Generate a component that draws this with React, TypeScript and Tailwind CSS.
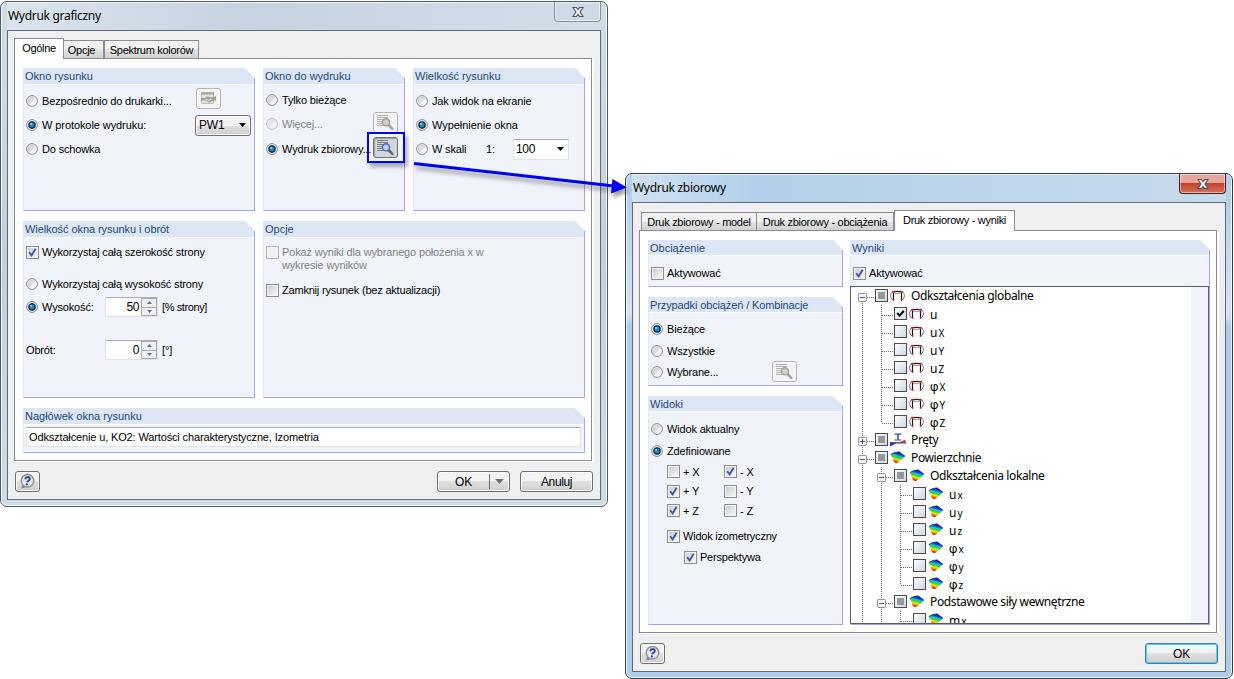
import type { ReactNode } from "react";
import clsx from "clsx";

type Children = { children?: ReactNode; className?: string };

function Text({ children, className }: Children) {
  return <span className={clsx("whitespace-nowrap", className)}>{children}</span>;
}

function Radio({ checked, disabled }: { checked?: boolean; disabled?: boolean }) {
  return (
    <svg viewBox="0 0 12 12" className={clsx("mr-px h-3 w-3 shrink-0", disabled && "opacity-50")}>
      <circle cx="6" cy="6" r="5.4" fill="#f4f4f4" stroke="#8b8d90" />
      <circle cx="6" cy="6" r="3.8" fill="#dcdddf" stroke="#c6c8ca" strokeWidth="0.8" />
      {!checked && <path d="M3.6 9.2 A3.9 3.9 0 0 0 9.2 3.6 Z" fill="#f3f3f3" />}
      {checked && <circle cx="6" cy="6" r="3.1" fill="#1787c0" stroke="#0b2f52" strokeWidth="1.3" />}
      {checked && <circle cx="5.2" cy="5" r="1.1" fill="#8fdcf5" />}
    </svg>
  );
}

function Checkbox({ checked, disabled }: { checked?: boolean; disabled?: boolean }) {
  return (
    <span
      className={clsx(
        "flex h-[13px] w-[13px] shrink-0 border bg-[#f4f4f4] p-px",
        disabled ? "border-[#b8b8b8]" : "border-[#8e8f8f]"
      )}
    >
      <span
        className={clsx(
          "flex h-[9px] w-[9px]",
          disabled ? "bg-[#f0f0f0]" : "bg-linear-to-br from-[#cbcfd5] to-[#f6f6f6]"
        )}
      >
        {checked && (
          <svg viewBox="0 0 9 9" className="h-[9px] w-[9px]">
            <path d="M1.2 4.2 L3.6 7.4 L7.6 0.8" fill="none" stroke="#41579e" strokeWidth="1.9" />
          </svg>
        )}
      </span>
    </span>
  );
}

function Group({ title, small, className, titleClass, children }: Children & { title: string; small?: boolean; titleClass?: string }) {
  return (
    <section className={clsx("relative flex flex-col bg-[#f0f3f9]", className)}>
      <header
        className={clsx(
          "flex shrink-0 items-center border-b border-white bg-[#dce6f4] pl-[2px] tracking-normal text-[#1e4a7c] [box-sizing:content-box]",
          small ? "h-[15px]" : "h-4"
        )}
      >
        <Text className={titleClass}>{title}</Text>
      </header>
      <div className="flex grow flex-col border-b border-l border-b-[#a6a6ee] border-l-[#e1e9f5] pl-[2px]">{children}</div>
      {/* cut corner and the edge below it */}
      <svg viewBox="0 0 10 10" className="absolute top-0 right-0 h-[10px] w-[10px]">
        <path d="M0 0 H10 V10 Z" fill="#fff" />
      </svg>
      <span className="absolute top-[10px] right-0 bottom-0 w-px bg-[#a6a6ee]" />
    </section>
  );
}

function Row({ children, className }: Children) {
  return <div className={clsx("flex shrink-0 items-center gap-[3px]", className)}>{children}</div>;
}

function Tab({ children, active, className }: Children & { active?: boolean }) {
  return (
    <div
      className={clsx(
        "flex items-center justify-center border border-b-0 border-[#8b8c95] tracking-[-0.29px]",
        active
          ? "relative -mb-px h-[21px] bg-white pb-[3px]"
          : "h-[18px] bg-linear-to-b from-[#f2f2f2] from-50% via-[#e4e4e4] via-50% to-[#d2d2d2]",
        className
      )}
    >
      {children}
    </div>
  );
}

function Button({ children, className }: Children) {
  return (
    <div
      className={clsx(
        "flex h-[21px] items-center justify-center rounded-[3px] border border-[#707070] bg-linear-to-b from-[#f3f3f3] from-50% via-[#e0e0e0] via-50% to-[#cfcfcf] shadow-[inset_0_0_0_1px_#fafafa]",
        className
      )}
    >
      {children}
    </div>
  );
}

function Find({ disabled }: { disabled?: boolean }) {
  return (
    <Button
      className={clsx(
        "w-[25px] shrink-0",
        disabled ? "border-[#b4b4b4]! bg-[#f3f3f3] bg-none!" : "bg-[#d3d6da] bg-none! shadow-[inset_1px_1px_1px_#9a9da2]!"
      )}
    >
      <svg viewBox="0 0 19 17" className="h-[17px] w-[19px] shrink-0">
        <path
          d="M1 1.5 H12 M1 3.5 H12 M1 5.5 H7 M1 7.5 H6 M1 9.5 H6 M1 11.5 H8"
          stroke={disabled ? "#a8a8a8" : "#70757c"}
          strokeWidth="0.9"
        />
        <path d="M12.5 11 L16.3 14.8" stroke={disabled ? "#a5a5a5" : "#5a678a"} strokeWidth="2.6" strokeLinecap="round" />
        <circle cx="10" cy="8.3" r="3.6" fill={disabled ? "#d0d0cb" : "#b5cdf5"} stroke={disabled ? "#a0a09c" : "#4a68b4"} strokeWidth="1.4" />
      </svg>
    </Button>
  );
}

function HelpButton() {
  return (
    <Button className="w-[25px]">
      <svg viewBox="0 0 17 17" className="h-[17px] w-[17px] shrink-0">
        <path d="M3 11 L2.5 15.5 L7.5 14 Z" fill="#80858c" />
        <circle cx="8.5" cy="7.8" r="6.3" fill="#e3e8f1" stroke="#8f949b" strokeWidth="1.5" />
        <path
          d="M6.4 6.2 C6.6 3.4 11 3.4 10.8 6 C10.6 7.6 8.6 7.5 8.2 9.4"
          fill="none"
          stroke="#2f437f"
          strokeWidth="1.9"
        />
        <circle cx="7.8" cy="11.4" r="1.1" fill="#2f437f" />
      </svg>
    </Button>
  );
}

function Arrow({ className }: { className?: string }) {
  return (
    <svg viewBox="0 0 7 4" className={clsx("shrink-0", className ?? "h-1 w-[7px]")}>
      <path d="M0 0 H7 L3.5 4 Z" fill="currentColor" />
    </svg>
  );
}

function Spinner({ value }: { value: string }) {
  return (
    <div className="flex h-5 w-[53px] shrink-0 border border-[#e2e3ea] border-t-[#abadb3] bg-white">
      <Text className="grow self-center pr-[2px] text-right text-xs tracking-[-0.4px]">{value}</Text>
      <span className="flex w-4 flex-col gap-px bg-[#a9abb0] p-px pl-px">
        <span className="flex grow items-center justify-center bg-[#f0f0f0] text-[#5a6fc0]">
          <Arrow className="h-[3px] w-[5px] rotate-180" />
        </span>
        <span className="flex grow items-center justify-center bg-[#f0f0f0] text-[#5a6fc0]">
          <Arrow className="h-[3px] w-[5px]" />
        </span>
      </span>
    </div>
  );
}

function Window({ title, active, className, children }: Children & { title: string; active?: boolean }) {
  return (
    <div
      className={clsx(
        "flex h-[506px] w-[608px] flex-col rounded-[7px] border px-[6px] pb-[6px] shadow-[inset_0_0_0_1px_rgba(255,255,255,0.75)]",
        active
          ? "border-[#2f3d4a] bg-linear-to-b from-[#b3d1ea] from-5% via-[#d5e4f3] via-28% to-[#aecdea] to-30%"
          : "border-[#4d5963] bg-linear-to-b from-[#d3dde7] via-[#c3cfdd] to-[#cfdbe7]",
        className
      )}
    >
      <div
        className={clsx(
          "mt-px flex h-[27px] shrink-0 justify-between",
          active
            ? "bg-linear-to-r from-[#d0e1f1] via-[#b1d0eb] via-20% to-[#c8daeb]"
            : "bg-linear-to-r from-[#dbe5ee] via-[#c6d2df] via-40% to-[#d4dee9]"
        )}
      >
        <Text className="mt-[4px] pl-px font-['Noto_Sans',sans-serif] text-xs leading-[18px] tracking-[-0.3px]">{title}</Text>
        <div
          className={clsx(
            "-mt-px flex h-[20px] w-[47px] items-center justify-center rounded-b-[4px] border border-t-0 shadow-[inset_0_0_0_1px_rgba(255,255,255,0.5)]",
            active
              ? "border-[#4b1a1a] bg-linear-to-b from-[#e8a79c] from-45% via-[#c4402b] via-50% to-[#d5705c]"
              : "border-[#8593a1] bg-[#cfdae5]"
          )}
        >
          <svg viewBox="0 0 12 10" className="h-[10px] w-3">
            <path d="M1 0.5 H4.4 L6 2.6 L7.6 0.5 H11 L8 5 L11 9.5 H7.6 L6 7.4 L4.4 9.5 H1 L4 5 Z" fill="#f6f6f6" stroke="#4b5560" strokeWidth="1.1" />
          </svg>
        </div>
      </div>
      <div className="flex grow flex-col border border-[#5f6c78] bg-[#efefef] pl-[6px]">{children}</div>
    </div>
  );
}

function TabPage({ children, className }: Children) {
  return (
    <div className={clsx("h-[403px] w-[578px] shrink-0 border border-[#8b8c95] bg-white shadow-[2px_1px_0_#fff]", className)}>
      {children}
    </div>
  );
}

/* Tree */

type Guide = "line" | "tee" | "corner" | "minus" | "plus" | "first";
type State = "on" | "off" | "mixed";
type Item = { guides: Guide[]; state: State; icon: "frame" | "beam" | "surface"; label: string; sub?: string };

const leaf = (label: string, sub?: string, last?: boolean, state: State = "off"): Item => ({
  guides: ["line", last ? "corner" : "tee"],
  state,
  icon: "frame",
  label,
  sub,
});

const surfaceLeaf = (label: string, sub: string, last?: boolean): Item => ({
  guides: ["line", "line", last ? "corner" : "tee"],
  state: "off",
  icon: "surface",
  label,
  sub,
});

const items: Item[] = [
  { guides: ["first"], state: "mixed", icon: "frame", label: "Odkształcenia globalne" },
  leaf("u", undefined, false, "on"),
  leaf("u", "X"),
  leaf("u", "Y"),
  leaf("u", "Z"),
  leaf("φ", "X"),
  leaf("φ", "Y"),
  leaf("φ", "Z", true),
  { guides: ["plus"], state: "mixed", icon: "beam", label: "Pręty" },
  { guides: ["minus"], state: "mixed", icon: "surface", label: "Powierzchnie" },
  { guides: ["line", "minus"], state: "mixed", icon: "surface", label: "Odkształcenia lokalne" },
  surfaceLeaf("u", "x"),
  surfaceLeaf("u", "y"),
  surfaceLeaf("u", "z"),
  surfaceLeaf("φ", "x"),
  surfaceLeaf("φ", "y"),
  surfaceLeaf("φ", "z", true),
  { guides: ["line", "minus"], state: "mixed", icon: "surface", label: "Podstawowe siły wewnętrzne" },
  surfaceLeaf("m", "x"),
];

function GuideCell({ kind, last }: { kind: Guide; last: boolean }) {
  const box = kind === "minus" || kind === "plus" || kind === "first";
  const bottom = kind === "corner" ? 10 : 18;
  return (
    <svg viewBox={last ? "0 0 22 18" : "0 0 19 18"} className={clsx("h-[18px] shrink-0", last ? "w-[22px]" : "w-[19px]")}>
      <path d={`M9.5 ${kind === "first" ? 10 : 0} V${bottom}`} stroke="#707070" strokeDasharray="1 1" />
      {kind !== "line" && <path d="M10 10.5 H22" stroke="#707070" strokeDasharray="1 1" />}
      {box && (
        <>
          <rect x="5.5" y="6.5" width="8" height="8" rx="0.8" fill="#f8f8f8" stroke="#8f9297" />
          <path d="M7 10.5 H12" stroke="#3b58a3" />
          {kind === "plus" && <path d="M9.5 8 V13" stroke="#3b58a3" />}
        </>
      )}
    </svg>
  );
}

function TreeCheck({ state }: { state: State }) {
  return (
    <svg viewBox="0 0 13 13" className="h-[13px] w-[13px] shrink-0">
      <defs>
        <linearGradient id="tc" x1="0" y1="0" x2="1" y2="1">
          <stop offset="0" stopColor="#fff" />
          <stop offset="1" stopColor="#cdd6e2" />
        </linearGradient>
      </defs>
      <rect x="0.5" y="0.5" width="12" height="12" fill="url(#tc)" stroke="#4c4c4c" />
      {state === "mixed" && <rect x="3" y="3" width="7" height="7" fill="#979797" />}
      {state === "on" && <path d="M3.2 6 L5.5 8.6 L9.8 4" fill="none" stroke="#000" strokeWidth="2" />}
    </svg>
  );
}

function ItemIcon({ icon }: { icon: Item["icon"] }) {
  if (icon === "frame") {
    return (
      <svg viewBox="0 0 15 14" className="h-[14px] w-[15px] shrink-0" fill="none">
        <path d="M2.8 11 C-0.2 8.5 0 4.5 2.6 2.6 M12.2 11 C15.2 8.5 15 4.5 12.4 2.6" stroke="#6e6e6e" />
        <path d="M4.5 4.5 H10.5" stroke="#a8a8a8" />
        <path d="M3.5 11.5 V4 M11.5 11.5 V4" stroke="#111" strokeWidth="1.2" />
        <path d="M3 3 Q7.5 1.6 12 3" stroke="#222" strokeWidth="1.3" />
        <path d="M2.2 3.3 L4.6 2.4 M10.4 2.4 L12.8 3.3 M2.9 10.9 H4.2 M10.9 10.9 H12.2" stroke="#e01515" strokeWidth="1.7" />
      </svg>
    );
  }
  if (icon === "beam") {
    return (
      <svg viewBox="0 0 17 16" className="h-4 w-[17px] shrink-0">
        <path d="M4.5 1.2 H11.5 M4.5 7 H11.5" stroke="#3c5596" strokeWidth="1.2" />
        <path d="M8 1 V7" stroke="#3c5596" strokeWidth="1.6" />
        <path d="M0 9.3 H8 L0 13.6 Z" fill="#1a28d8" />
        <path d="M7 10.3 L15.5 6.5 V10.3 Z" fill="#d93a35" />
        <path d="M0 9.8 H16" stroke="#5a5058" strokeWidth="1.2" />
      </svg>
    );
  }
  return (
    <svg viewBox="0 0 16 14" className="h-[14px] w-4 shrink-0">
      <defs>
        <linearGradient id="sf" x1="0.68" y1="0" x2="0.32" y2="1">
          <stop offset="0.1" stopColor="#0a12a8" />
          <stop offset="0.25" stopColor="#0d50e6" />
          <stop offset="0.38" stopColor="#14c6d8" />
          <stop offset="0.52" stopColor="#3bd61c" />
          <stop offset="0.68" stopColor="#ecea10" />
          <stop offset="0.82" stopColor="#f4780c" />
          <stop offset="0.94" stopColor="#dc1010" />
        </linearGradient>
      </defs>
      <path d="M0.8 3.6 Q4.5 0.8 9.2 0.9 Q11.6 2.6 15 5.3 Q11.2 9.6 7 12 Q4.6 12.4 3.6 10.6 Q3 7 0.8 3.6 Z" fill="url(#sf)" />
      <path d="M0.8 3.6 Q4.5 0.8 9.2 0.9 Q11.6 2.6 15 5.3" fill="none" stroke="#10154c" strokeWidth="0.8" />
    </svg>
  );
}

function TreeRow({ guides, state, icon, label, sub }: Item) {
  return (
    <div className="flex h-[18px] shrink-0">
      {guides.map((kind, i) => (
        <GuideCell key={i} kind={kind} last={i === guides.length - 1} />
      ))}
      <span className="mt-[2px] flex items-start">
        <TreeCheck state={state} />
        <span className="ml-[2px] flex w-[21px] shrink-0">
          <ItemIcon icon={icon} />
        </span>
      </span>
      {label.length > 1 ? (
        <Text className="font-['Noto_Sans',sans-serif] text-xs leading-[18px] tracking-[-0.38px]">{label}</Text>
      ) : (
        <Text className="mt-px font-['Noto_Sans',sans-serif] text-xs leading-[18px] tracking-normal">
          <span className={clsx(label === "φ" && "font-['Roboto',sans-serif]")}>{label}</span>
          {sub && <span className="ml-px text-[10px]">{sub}</span>}
        </Text>
      )}
    </div>
  );
}

/* Windows */

function GraphicPrintout() {
  return (
    <Window title="Wydruk graficzny">
      <div className="mt-[7px] flex h-5 shrink-0 items-end">
        <Tab active className="w-[50px]"><Text>Ogólne</Text></Tab>
        <Tab className="w-[40px] border-l-0 pr-1"><Text>Opcje</Text></Tab>
        <Tab className="w-[95px]"><Text>Spektrum kolorów</Text></Tab>
      </div>
      <TabPage className="flex flex-col gap-[10px] pt-[9px] pl-2">
        <div className="flex gap-2">
          <Group title="Okno rysunku" className="h-[143px] w-[232px]">
            <Row className="mt-1 h-6">
              <Radio />
              <Text className="grow">Bezpośrednio do drukarki...</Text>
              <Button className="mr-[34px] mb-[5px] w-[25px] border-[#b4b4b4]! bg-[#f3f3f3] bg-none!">
                <svg viewBox="0 0 17 15" className="h-[15px] w-[17px] shrink-0">
                  <path d="M1.5 1.5 H13.5 V12.5 H1.5 Z" fill="#e2e2de" stroke="#c0c0bc" />
                  <path d="M1 2.5 H14" stroke="#a4a4a0" strokeWidth="2" />
                  <path d="M1 7 H5 L7 5.2 L11 6.5 L16 5 V9.5 L12 10 L9.5 11.8 L6 9.6 H1 Z" fill="#a3a39e" />
                  <path d="M5.5 8 L9 9.4 L11.5 8" stroke="#e6e6e2" fill="none" />
                </svg>
              </Button>
            </Row>
            <Row className="h-6">
              <Radio checked />
              <Text className="grow tracking-[-0.08px]">W protokole wydruku:</Text>
              <Button className="mr-1 w-[56px] justify-between! pr-1 pl-[3px]">
                <Text className="text-xs">PW1</Text>
                <Arrow />
              </Button>
            </Row>
            <Row className="h-6">
              <Radio />
              <Text>Do schowka</Text>
            </Row>
          </Group>
          <Group title="Okno do wydruku" className="h-[143px] w-[142px]">
            <Row className="mt-1 h-[22px]">
              <Radio />
              <Text>Tylko bieżące</Text>
            </Row>
            <Row className="h-[26px]">
              <Radio disabled />
              <Text className="grow text-[#838383]">Więcej...</Text>
              <span className="mr-[7px] mb-[3px]"><Find disabled /></span>
            </Row>
            <Row className="h-6">
              <Radio checked />
              <Text className="w-[88px]">Wydruk zbiorowy...</Text>
              <span className="mb-[3px]"><Find /></span>
            </Row>
          </Group>
          <Group title="Wielkość rysunku" className="h-[143px] w-[172px]">
            <Row className="mt-1 h-6">
              <Radio />
              <Text>Jak widok na ekranie</Text>
            </Row>
            <Row className="h-6">
              <Radio checked />
              <Text className="tracking-[-0.05px]">Wypełnienie okna</Text>
            </Row>
            <Row className="h-6">
              <Radio />
              <Text className="w-[51px]">W skali</Text>
              <Text className="w-6">1:</Text>
              <div className="flex h-[21px] w-[56px] items-center justify-between border border-[#e2e3ea] border-t-[#abadb3] bg-white pr-1 pl-[2px]">
                <Text className="text-xs tracking-[-0.3px]">100</Text>
                <Arrow />
              </div>
            </Row>
          </Group>
        </div>
        <div className="flex gap-2">
          <Group title="Wielkość okna rysunku i obrót" className="h-[177px] w-[232px]" titleClass="tracking-[-0.07px]">
            <Row className="mt-[5px] h-[18px]">
              <Checkbox checked />
              <Text>Wykorzystaj całą szerokość strony</Text>
            </Row>
            <Row className="mt-[14px] h-[18px]">
              <Radio />
              <Text>Wykorzystaj całą wysokość strony</Text>
            </Row>
            <Row className="mt-[3px] h-[22px]">
              <Radio checked />
              <Text className="w-[60px]">Wysokość:</Text>
              <Spinner value="50" />
              <Text className="pl-px tracking-[-0.4px]">[% strony]</Text>
            </Row>
            <Row className="mt-[21px] h-[22px]">
              <Text className="w-[76px]">Obrót:</Text>
              <Spinner value="0" />
              <Text className="pl-px">[°]</Text>
            </Row>
          </Group>
          <Group title="Opcje" className="h-[177px] w-[322px]">
            <div className="mt-2 flex gap-[3px] leading-[13px] text-[#838383]">
              <Checkbox disabled />
              <p className="whitespace-nowrap">
                Pokaż wyniki dla wybranego położenia x w<br />
                wykresie wyników
              </p>
            </div>
            <Row className="mt-[11px] h-[14px]">
              <Checkbox />
              <Text className="tracking-[-0.2px]">Zamknij rysunek (bez aktualizacji)</Text>
            </Row>
          </Group>
        </div>
        <Group title="Nagłówek okna rysunku" className="h-[45px] w-[562px]">
          <div className="mt-[2px] flex h-5 w-[555px] items-center border border-[#e2e3ea] border-t-[#abadb3] bg-white pl-[2px]">
            <Text className="tracking-[-0.14px]">Odkształcenie u, KO2: Wartości charakterystyczne, Izometria</Text>
          </div>
        </Group>
      </TabPage>
      <div className="mt-[10px] ml-px flex">
        <HelpButton />
        <Button className="ml-[397px] w-[73px] pl-[10px]">
          <Text className="mr-auto ml-[7px] text-xs">OK</Text>
          <span className="h-[15px] w-px bg-[#707070]" />
          <Arrow className="mx-[5px] h-[5px] w-[9px] text-[#707070]" />
        </Button>
        <Button className="ml-[10px] w-[73px]"><Text className="text-xs tracking-[-0.4px]">Anuluj</Text></Button>
      </div>
    </Window>
  );
}

function MassPrint() {
  return (
    <Window active title="Wydruk zbiorowy" className="mt-[172px] ml-[17px]">
      <div className="mt-[7px] flex h-5 shrink-0 items-end pl-[2px]">
        <Tab className="w-[116px]"><Text>Druk zbiorowy - model</Text></Tab>
        <Tab className="w-[137px] border-l-0"><Text>Druk zbiorowy - obciążenia</Text></Tab>
        <Tab active className="w-[121px]"><Text>Druk zbiorowy - wyniki</Text></Tab>
      </div>
      <TabPage className="flex gap-[7px] pt-[9px] pl-2">
        <div className="flex w-[195px] flex-col gap-[10px]">
          <Group small title="Obciążenie" className="h-[47px]">
            <Row className="mt-2 h-[18px]">
              <Checkbox />
              <Text>Aktywować</Text>
            </Row>
          </Group>
          <Group small title="Przypadki obciążeń / Kombinacje" className="h-[89px]" titleClass="tracking-[-0.12px]">
            <Row className="mt-[5px] h-[22px]">
              <Radio checked />
              <Text>Bieżące</Text>
            </Row>
            <Row className="h-[21px]">
              <Radio />
              <Text>Wszystkie</Text>
            </Row>
            <Row className="h-[21px]">
              <Radio />
              <Text className="w-[102px]">Wybrane...</Text>
              <Find disabled />
            </Row>
          </Group>
          <Group small title="Widoki" className="h-[229px]">
            <Row className="mt-[6px] h-[22px]">
              <Radio />
              <Text>Widok aktualny</Text>
            </Row>
            <Row className="h-[22px]">
              <Radio checked />
              <Text>Zdefiniowane</Text>
            </Row>
            <div className="mt-[3px] grid grid-cols-[57px_57px] grid-rows-[13px_13px_13px] gap-y-[6.5px] pl-4">
              <Row><Checkbox /><Text>+ X</Text></Row>
              <Row><Checkbox checked /><Text>- X</Text></Row>
              <Row><Checkbox checked /><Text>+ Y</Text></Row>
              <Row><Checkbox /><Text>- Y</Text></Row>
              <Row><Checkbox checked /><Text>+ Z</Text></Row>
              <Row><Checkbox /><Text>- Z</Text></Row>
            </div>
            <Row className="mt-3 pl-4">
              <Checkbox checked />
              <Text className="tracking-[-0.22px]">Widok izometryczny</Text>
            </Row>
            <Row className="mt-[7px] pl-[33px]">
              <Checkbox checked />
              <Text className="tracking-[-0.22px]">Perspektywa</Text>
            </Row>
          </Group>
        </div>
        <Group small title="Wyniki" className="h-[385px] w-[360px]">
          <Row className="mt-2 h-[18px]">
            <Checkbox checked />
            <Text>Aktywować</Text>
          </Row>
          <div className="mt-[4px] -ml-[3px] flex h-[338px] w-[359px] border border-[#5c5c60] bg-white">
            <div className="flex grow flex-col overflow-hidden pl-[2px]">
              {items.map((item, i) => (
                <TreeRow key={i} {...item} />
              ))}
            </div>
            <span className="w-[17px] bg-[#f0f3f9]" />
          </div>
        </Group>
      </TabPage>
      <div className="mt-[10px] ml-px flex">
        <HelpButton />
        <Button className="ml-[480px] w-[73px] border-[#3c7fb1]! shadow-[inset_0_0_0_1px_#46d0f5]!">
          <Text className="text-xs">OK</Text>
        </Button>
      </div>
    </Window>
  );
}

export default function App() {
  return (
    <div className="relative flex h-[679px] w-[1234px] items-start overflow-hidden bg-white pt-px font-['Liberation_Sans',Arial,sans-serif] text-[11px] leading-[14px] tracking-[-0.16px] text-black">
      <GraphicPrintout />
      <MassPrint />
      {/* Callout */}
      <span className="absolute top-[132px] left-[367px] h-[31px] w-[38px] border-2 border-[#0000f5] shadow-[3px_4px_4px_rgba(0,0,0,0.3)]" />
      <svg viewBox="0 0 222 50" className="absolute top-[150px] left-[410px] h-[50px] w-[222px] drop-shadow-[2px_4px_2px_rgba(0,0,0,0.4)]">
        <path d="M4 13.5 L204 36" stroke="#0000f5" strokeWidth="3" />
        <path d="M202.5 29 L217 37.5 L201 43.5 Z" fill="#0000f5" />
      </svg>
    </div>
  );
}
